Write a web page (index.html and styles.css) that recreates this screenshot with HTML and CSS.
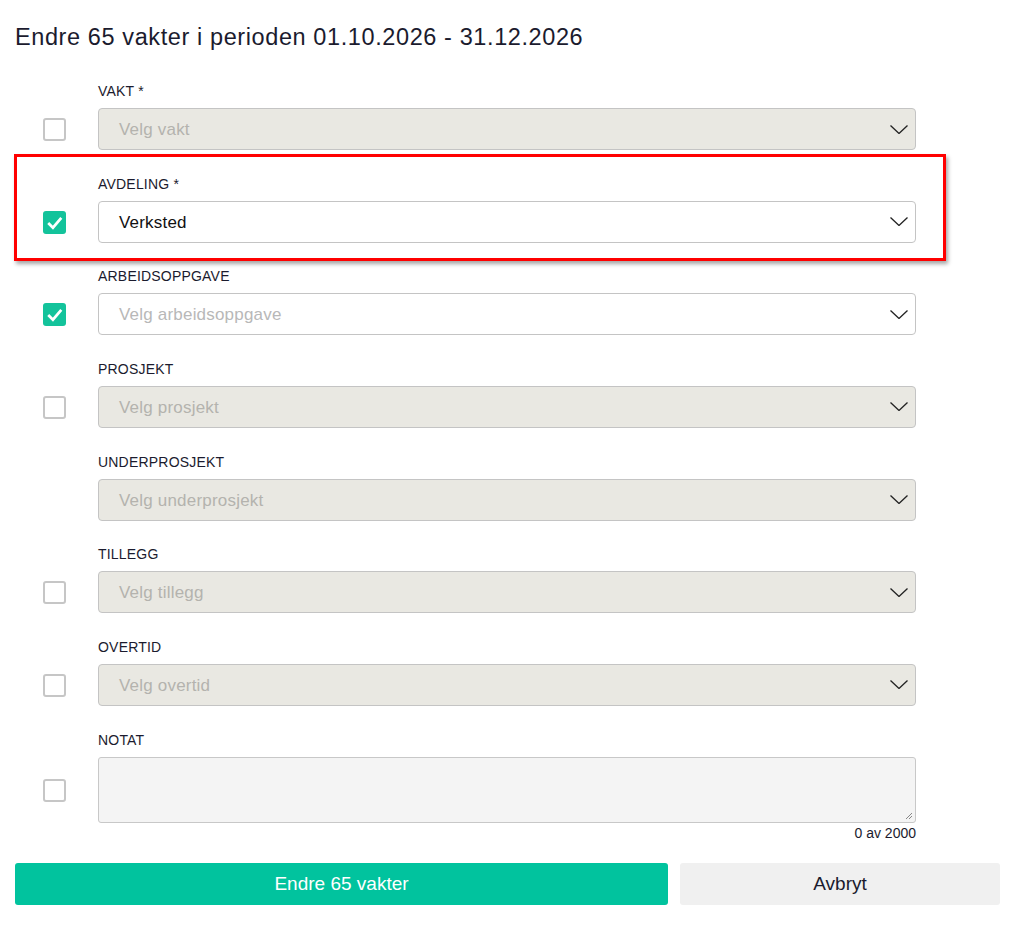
FILE: index.html
```html
<!DOCTYPE html>
<html lang="no">
<head>
    <meta charset="UTF-8">
    <meta name="viewport" content="width=device-width, initial-scale=1.0">
    <title>Endre vakter</title>
    <link rel="stylesheet" href="styles.css">
</head>
<body>
    <div class="container">
        <h1 class="title">Endre 65 vakter i perioden 01.10.2026 - 31.12.2026</h1>

        <div class="shift-form">
            <div class="field-row">
                <span class="check"></span>
                <div class="field">
                    <div class="label">VAKT *</div>
                    <div class="select disabled">
                        <span class="placeholder">Velg vakt</span>
                        <svg class="chevron" viewBox="0 0 18 9"><polyline points="0.5,0.5 9,8.5 17.5,0.5"/></svg>
                    </div>
                </div>
            </div>

            <div class="field-row marked">
                <span class="check checked">
                    <svg viewBox="0 0 22 22"><polyline points="5,11.5 9.5,16 17.5,6.5"/></svg>
                </span>
                <div class="field">
                    <div class="label">AVDELING *</div>
                    <div class="select">
                        <span class="value">Verksted</span>
                        <svg class="chevron" viewBox="0 0 18 9"><polyline points="0.5,0.5 9,8.5 17.5,0.5"/></svg>
                    </div>
                </div>
                <div class="highlight"></div>
            </div>

            <div class="field-row">
                <span class="check checked">
                    <svg viewBox="0 0 22 22"><polyline points="5,11.5 9.5,16 17.5,6.5"/></svg>
                </span>
                <div class="field">
                    <div class="label">ARBEIDSOPPGAVE</div>
                    <div class="select">
                        <span class="placeholder">Velg arbeidsoppgave</span>
                        <svg class="chevron" viewBox="0 0 18 9"><polyline points="0.5,0.5 9,8.5 17.5,0.5"/></svg>
                    </div>
                </div>
            </div>

            <div class="field-row">
                <span class="check"></span>
                <div class="field">
                    <div class="label">PROSJEKT</div>
                    <div class="select disabled">
                        <span class="placeholder">Velg prosjekt</span>
                        <svg class="chevron" viewBox="0 0 18 9"><polyline points="0.5,0.5 9,8.5 17.5,0.5"/></svg>
                    </div>
                </div>
            </div>

            <div class="field-row">
                <span></span>
                <div class="field">
                    <div class="label">UNDERPROSJEKT</div>
                    <div class="select disabled">
                        <span class="placeholder">Velg underprosjekt</span>
                        <svg class="chevron" viewBox="0 0 18 9"><polyline points="0.5,0.5 9,8.5 17.5,0.5"/></svg>
                    </div>
                </div>
            </div>

            <div class="field-row">
                <span class="check"></span>
                <div class="field">
                    <div class="label">TILLEGG</div>
                    <div class="select disabled">
                        <span class="placeholder">Velg tillegg</span>
                        <svg class="chevron" viewBox="0 0 18 9"><polyline points="0.5,0.5 9,8.5 17.5,0.5"/></svg>
                    </div>
                </div>
            </div>

            <div class="field-row">
                <span class="check"></span>
                <div class="field">
                    <div class="label">OVERTID</div>
                    <div class="select disabled">
                        <span class="placeholder">Velg overtid</span>
                        <svg class="chevron" viewBox="0 0 18 9"><polyline points="0.5,0.5 9,8.5 17.5,0.5"/></svg>
                    </div>
                </div>
            </div>

            <div class="field-row">
                <span class="check"></span>
                <div class="field">
                    <div class="label">NOTAT</div>
                    <div class="note">
                        <svg class="grip" viewBox="0 0 8 8"><line x1="1" y1="7" x2="7" y2="1"/><line x1="4" y1="7" x2="7" y2="4"/></svg>
                    </div>
                </div>
            </div>
        </div>

        <div class="counter">0 av 2000</div>

        <div class="actions">
            <button class="btn-primary">Endre 65 vakter</button>
            <button class="btn-cancel">Avbryt</button>
        </div>
    </div>
</body>
</html>
```

FILE: styles.css
```css
* {
    margin: 0;
    padding: 0;
    box-sizing: border-box;
}
body {
    font-family: 'Liberation Sans', Arial, sans-serif;
    background-color: #fff;
    color: #1b1b2e;
}
.container {
    width: 1010px;
    padding: 24px 10px 0 15px;
}
.title {
    font-size: 23.5px;
    font-weight: 400;
    letter-spacing: 0.6px;
    line-height: 26px;
    color: #1b1b2e;
    margin-bottom: 31px;
}
.shift-form {
    display: flex;
    flex-direction: column;
    gap: 23.67px;
    width: 901px;
}
.field-row {
    position: relative;
    display: grid;
    grid-template-columns: 83px 1fr;
    align-items: end;
}
.field-row > span {
    align-self: end;
}
.label {
    font-size: 14px;
    letter-spacing: 0.2px;
    line-height: 20px;
    margin-bottom: 7px;
    color: #1b1b2e;
}
.select {
    height: 42px;
    display: flex;
    align-items: center;
    justify-content: space-between;
    padding: 2px 7px 0 20px;
    border: 1px solid #c4c4c4;
    border-radius: 4px;
    background-color: #fff;
    font-size: 17px;
    letter-spacing: 0.2px;
}
.select.disabled {
    background-color: #e9e8e2;
}
.select .placeholder {
    color: #b8b8b8;
}
.select.disabled .placeholder {
    color: #b4b3ae;
}
.select .value {
    color: #111;
}
.chevron {
    width: 18px;
    height: 9px;
    margin-top: -2px;
    fill: none;
    stroke: #222;
    stroke-width: 1.3;
}
.check {
    width: 23px;
    height: 23px;
    margin: 0 0 9px 28px;
    border: 2px solid #c6c6c6;
    border-radius: 3px;
}
.check.checked {
    border: none;
    background-color: #13c39b;
}
.check svg {
    display: block;
    width: 23px;
    height: 23px;
    fill: none;
    stroke: #fff;
    stroke-width: 2.6;
}
.field-row:last-child .check {
    margin-bottom: 21px;
}
.note {
    position: relative;
    height: 66px;
    border: 1px solid #c8c8c8;
    border-radius: 3px;
    background-color: #f4f4f4;
}
.grip {
    position: absolute;
    right: 2px;
    bottom: 2px;
    width: 8px;
    height: 8px;
    stroke: #888;
    stroke-width: 1;
}
/* red marker drawn over the department row */
.highlight {
    position: absolute;
    left: -1px;
    top: -20px;
    width: 932px;
    height: 107px;
    border: 3px solid #f00;
    box-shadow: 2px 3px 4px rgba(0, 0, 0, 0.35);
    pointer-events: none;
}
.counter {
    width: 901px;
    text-align: right;
    font-size: 14px;
    line-height: 20px;
    color: #1b1b2e;
}
.actions {
    display: flex;
    gap: 12px;
    margin-top: 20px;
}
.actions button {
    height: 42px;
    border: none;
    border-radius: 3px;
    font-family: 'Liberation Sans', Arial, sans-serif;
    font-size: 19px;
    cursor: pointer;
}
.btn-primary {
    width: 653px;
    background-color: #01c39e;
    color: #fff;
}
.btn-cancel {
    width: 320px;
    background-color: #f0f0f0;
    color: #1b1b2e;
}
```
